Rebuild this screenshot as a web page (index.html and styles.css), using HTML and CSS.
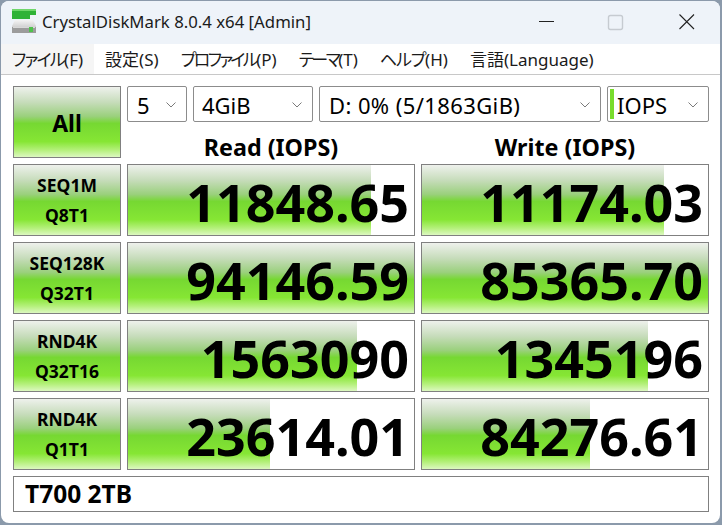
FILE: index.html
```html
<!DOCTYPE html>
<html lang="en">
<head>
  <meta charset="UTF-8">
  <meta name="viewport" content="width=device-width, initial-scale=1.0">
  <title>CrystalDiskMark 8.0.4 x64 [Admin]</title>
  <link rel="stylesheet" href="styles.css">
</head>
<body>
  <div class="window">
    <div class="titlebar">
      <svg class="app-icon" width="24" height="24" viewBox="0 0 24 24">
        <defs>
          <linearGradient id="drive" x1="0" y1="0" x2="0" y2="1">
            <stop offset="0" stop-color="#f4f4f4"/>
            <stop offset="1" stop-color="#b4b4b4"/>
          </linearGradient>
        </defs>
        <rect x="0" y="0" width="24" height="2" fill="#6fd66a"/>
        <rect x="0" y="2" width="24" height="4" fill="#2fb237"/>
        <rect x="0" y="6" width="18" height="4" fill="#2fb237"/>
        <path d="M3 11h18l3 6v7H0v-7z" fill="url(#drive)"/>
        <rect x="0" y="18" width="24" height="6" fill="#9c9c9c"/>
        <rect x="1" y="18" width="22" height="1" fill="#d8d8d8"/>
        <rect x="17" y="18" width="4" height="5" fill="#4fc24c"/>
      </svg>
      <span class="app-title">CrystalDiskMark 8.0.4 x64 [Admin]</span>
      <div class="win-buttons">
        <svg width="70" height="43" viewBox="0 0 70 43"><path d="M29 20.5h15" stroke="#222" stroke-width="1" fill="none"/></svg>
        <svg width="70" height="43" viewBox="0 0 70 43"><rect x="28.5" y="14.5" width="14" height="14" rx="2" stroke="#c6cbd1" stroke-width="1.4" fill="none"/></svg>
        <svg width="70" height="43" viewBox="0 0 70 43"><path d="M29.5 13.5l14.5 14.5M44 13.5l-14.5 14.5" stroke="#222" stroke-width="1.1" fill="none"/></svg>
      </div>
    </div>
    <div class="menubar">
      <span class="menu-item active"><span class="kana">ファイル</span>(F)</span>
      <span class="menu-item">設定(S)</span>
      <span class="menu-item"><span class="kana-tight">プロファイル</span>(P)</span>
      <span class="menu-item"><span class="kana-tight">テーマ</span>(T)</span>
      <span class="menu-item"><span class="kana-loose">ヘルプ</span>(H)</span>
      <span class="menu-item">言語(Language)</span>
    </div>
    <div class="content">
      <div class="grid">
        <div class="test-btn all-btn">All</div>
        <div class="top-cell">
          <div class="selects">
            <div class="select sel-count">5<svg class="chev" width="10" height="6" viewBox="0 0 10 6"><path d="M.5 .5l4.5 4.5 4.5-4.5"/></svg></div>
            <div class="select sel-size">4GiB<svg class="chev" width="10" height="6" viewBox="0 0 10 6"><path d="M.5 .5l4.5 4.5 4.5-4.5"/></svg></div>
            <div class="select sel-drive">D: 0% (5/1863GiB)<svg class="chev" width="10" height="6" viewBox="0 0 10 6"><path d="M.5 .5l4.5 4.5 4.5-4.5"/></svg></div>
            <div class="select sel-unit"><i class="unit-mark"></i>IOPS<svg class="chev" width="10" height="6" viewBox="0 0 10 6"><path d="M.5 .5l4.5 4.5 4.5-4.5"/></svg></div>
          </div>
          <div class="headers">
            <div class="col-head">Read (IOPS)</div>
            <div class="col-head">Write (IOPS)</div>
          </div>
        </div>

        <div class="test-btn"><span>SEQ1M</span><span>Q8T1</span></div>
        <div class="result"><div class="fill" style="width:85%"></div><span class="value">11848.65</span></div>
        <div class="result"><div class="fill" style="width:84.6%"></div><span class="value">11174.03</span></div>

        <div class="test-btn"><span>SEQ128K</span><span>Q32T1</span></div>
        <div class="result"><div class="fill" style="width:100%"></div><span class="value">94146.59</span></div>
        <div class="result"><div class="fill" style="width:100%"></div><span class="value">85365.70</span></div>

        <div class="test-btn"><span>RND4K</span><span>Q32T16</span></div>
        <div class="result"><div class="fill" style="width:80.1%"></div><span class="value">1563090</span></div>
        <div class="result"><div class="fill" style="width:79%"></div><span class="value">1345196</span></div>

        <div class="test-btn"><span>RND4K</span><span>Q1T1</span></div>
        <div class="result"><div class="fill" style="width:49.7%"></div><span class="value">23614.01</span></div>
        <div class="result"><div class="fill" style="width:58.7%"></div><span class="value">84276.61</span></div>

        <div class="comment">T700 2TB</div>
      </div>
    </div>
  </div>
</body>
</html>
```
FILE: styles.css
```css
html, body {
  margin: 0;
  height: 100%;
}
body {
  background: #8b9aab;
  box-sizing: border-box;
  padding: 1px 2px 2px 1px;
  font-family: "Noto Sans", "Noto Sans CJK JP", sans-serif;
  color: #000;
}
.window {
  height: 100%;
  border-radius: 8px;
  overflow: hidden;
  background: #fff;
  display: flex;
  flex-direction: column;
}
.titlebar {
  height: 43px;
  background: #eef3f9;
  display: flex;
  align-items: center;
  padding-left: 11px;
}
.app-icon {
  margin-right: 6px;
  margin-bottom: 3px;
}
.app-title {
  font-size: 16.75px;
  color: #1b1b1b;
  margin-bottom: 2px;
}
.win-buttons {
  margin-left: auto;
  display: flex;
}
.menubar {
  height: 30px;
  border-bottom: 1px solid #c8c8c8;
  display: flex;
  align-items: center;
  font-size: 17px;
  font-feature-settings: "palt";
  color: #1a1a1a;
}
.menu-item {
  padding: 1px 11px 0;
  line-height: 29px;
}
.menu-item.active {
  background: #f5f5f5;
}
.kana { letter-spacing: -1.7px; }
.kana-tight { letter-spacing: -2.6px; }
.kana-loose { letter-spacing: -1.2px; }
.content {
  padding: 11px 12px 0;
}
.grid {
  display: grid;
  grid-template-columns: 108px 288px 288px;
  grid-template-rows: 72px repeat(4, 72px) 36px;
  column-gap: 6px;
  row-gap: 6px;
}
.test-btn,
.fill {
  background: linear-gradient(to bottom,
    #eef1ec 0%, #c6dcba 22%, #9ad07c 42%, #76d832 52%, #86e634 78%, #b4f07a 90%, #dcf8c0 100%);
}
.test-btn {
  box-sizing: border-box;
  border: 1px solid #808080;
  font-weight: 700;
  font-size: 17.5px;
  display: flex;
  flex-direction: column;
  align-items: center;
  justify-content: center;
  gap: 8px;
  line-height: 22px;
}
.all-btn {
  font-size: 23px;
  padding-top: 2px;
}
.top-cell {
  grid-column: 2 / 4;
  display: flex;
  flex-direction: column;
}
.selects {
  display: flex;
  gap: 6px;
  height: 36px;
}
.select {
  box-sizing: border-box;
  border: 1px solid #8c8c8c;
  border-radius: 2px;
  background: #fff;
  font-size: 22px;
  display: flex;
  align-items: center;
  padding-left: 9px;
  padding-top: 2px;
  position: relative;
}
.chev {
  position: absolute;
  right: 10px;
  top: 15px;
  fill: none;
  stroke: #7a7a7a;
  stroke-width: 1;
}
.sel-count { width: 60px; }
.sel-size { width: 120px; padding-left: 8px; }
.sel-drive { flex: 1; letter-spacing: .4px; }
.sel-unit { width: 102px; padding-left: 2px; }
.unit-mark {
  width: 4px;
  height: 30px;
  background: #78dc2c;
  margin: -2px 3px 0 0;
}
.headers {
  display: grid;
  grid-template-columns: 288px 288px;
  column-gap: 6px;
  padding-top: 14px;
}
.col-head {
  font-weight: 700;
  font-size: 23.3px;
  text-align: center;
  line-height: 22px;
}
.result {
  position: relative;
  box-sizing: border-box;
  border: 1px solid #808080;
  background: #fff;
}
.fill {
  position: absolute;
  left: 0;
  top: 0;
  bottom: 0;
}
.value {
  position: absolute;
  right: 5px;
  top: 3px;
  bottom: 0;
  display: flex;
  align-items: center;
  font-weight: 700;
  font-size: 52px;
}
.comment {
  grid-column: 1 / 4;
  box-sizing: border-box;
  border: 1px solid #808080;
  font-weight: 700;
  font-size: 24.5px;
  line-height: 34px;
  padding-left: 11px;
}
```
